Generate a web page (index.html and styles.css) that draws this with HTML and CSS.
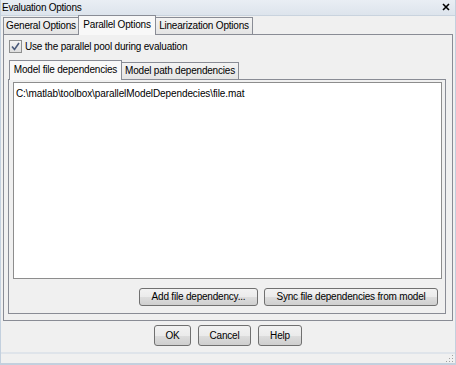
FILE: index.html
```html
<!DOCTYPE html>
<html lang="en">
<head>
<meta charset="UTF-8">
<title>Evaluation Options</title>
<link rel="stylesheet" href="styles.css">
</head>
<body>
<div class="window">
  <div class="titlebar">
    <span class="title">Evaluation Options</span>
    <svg class="close" width="8" height="8" viewBox="0 0 8 8"><path d="M1 1 L7 7 M7 1 L1 7" stroke="#000" stroke-width="1.6"/></svg>
  </div>

  <div class="tabs outer-tabs">
    <div class="tab t-general">General Options</div>
    <div class="tab active t-parallel">Parallel Options</div>
    <div class="tab t-linear">Linearization Options</div>
  </div>

  <div class="panel">
    <label class="check">
      <span class="checkbox">
        <svg width="9" height="9" viewBox="0 0 9 9"><path d="M1 4.5 L3.5 7.5 L8 1" fill="none" stroke="#4a5a7a" stroke-width="1.6"/></svg>
      </span>
      Use the parallel pool during evaluation
    </label>

    <div class="tabs inner-tabs">
      <div class="tab active t-file">Model file dependencies</div>
      <div class="tab t-path">Model path dependencies</div>
    </div>
    <div class="inner-panel">
      <div class="list">C:\matlab\toolbox\parallelModelDependecies\file.mat</div>
      <div class="actions">
        <button class="btn add">Add file dependency...</button>
        <button class="btn sync">Sync file dependencies from model</button>
      </div>
    </div>
  </div>

  <div class="footer">
    <button class="btn ok">OK</button>
    <button class="btn cancel">Cancel</button>
    <button class="btn help">Help</button>
  </div>

  <div class="status">
    <svg class="grip" width="9" height="9" viewBox="0 0 9 9">
      <rect x="7" y="1" width="1" height="1" fill="#a0a0a0"/>
      <rect x="4" y="4" width="1" height="1" fill="#a0a0a0"/>
      <rect x="7" y="4" width="1" height="1" fill="#a0a0a0"/>
      <rect x="1" y="7" width="1" height="1" fill="#a0a0a0"/>
      <rect x="4" y="7" width="1" height="1" fill="#a0a0a0"/>
      <rect x="7" y="7" width="1" height="1" fill="#a0a0a0"/>
    </svg>
  </div>
</div>
</body>
</html>
```

FILE: styles.css
```css
body {
  margin: 0;
  font-family: "Liberation Sans", Arial, sans-serif;
  font-size: 10px;
  letter-spacing: -0.2px;
  color: #000;
}

.window {
  width: 456px;
  height: 365px;
  box-sizing: border-box;
  background: #f0f0f0;
  border-left: 1px solid #c3d0de;
  border-right: 1px solid #c3d0de;
  border-bottom: 2px solid #c3d0de;
  display: flex;
  flex-direction: column;
}

.titlebar {
  height: 15px;
  background: linear-gradient(#e9eef4, #dde4ec);
  border-bottom: 1px solid #c9d3de;
  display: flex;
  align-items: center;
  justify-content: space-between;
  padding: 0 5px 0 1px;
}

.title {
  letter-spacing: -0.25px;
}

.tabs {
  display: flex;
  align-items: flex-end;
}

.tab {
  border: 1px solid #898c95;
  border-bottom: none;
  background: linear-gradient(#f3f3f3, #e4e4e4);
  box-sizing: border-box;
  text-align: center;
  height: 17px;
  line-height: 16px;
  margin-right: -1px;
  white-space: nowrap;
}

.tab.active {
  background: #f8f8f8;
  position: relative;
  z-index: 1;
  margin-bottom: -1px;
  height: 20px;
  line-height: 18px;
}

.t-general { width: 76px; }
.t-parallel { width: 78px; }
.t-linear { width: 98px; }
.t-file { width: 113px; }
.t-path { width: 118px; }

.outer-tabs {
  padding-left: 2px;
  height: 18px;
}

.panel {
  margin: 0 2px 0 2px;
  height: 288px;
  box-sizing: border-box;
  border: 1px solid #898c95;
  background: #f0f0f0;
  padding: 5px 6px 6px 4px;
  display: flex;
  flex-direction: column;
}

.check {
  display: flex;
  align-items: center;
  gap: 3px;
  height: 13px;
  margin-left: 1px;
}

.checkbox {
  width: 11px;
  height: 11px;
  border: 1px solid #8e8f8f;
  background: linear-gradient(#f4f4f4, #dedede);
  display: flex;
  align-items: center;
  justify-content: center;
}

.inner-tabs {
  margin-top: 9px;
  height: 17px;
  padding-left: 1px;
}

.inner-panel {
  flex: 1;
  border: 1px solid #898c95;
  background: #f0f0f0;
  padding: 2px 3px 5px 4px;
  display: flex;
  flex-direction: column;
}

.list {
  height: 197px;
  box-sizing: border-box;
  background: #fff;
  border: 1px solid #8d8d8d;
  padding: 5px 2px;
  letter-spacing: -0.1px;
}

.actions {
  display: flex;
  justify-content: flex-end;
  gap: 6px;
  margin-top: 9px;
  padding-right: 4px;
}

.btn {
  font-family: "Liberation Sans", Arial, sans-serif;
  font-size: 10px;
  letter-spacing: -0.2px;
  white-space: nowrap;
  height: 18px;
  padding: 0;
  border: 1px solid #707070;
  border-radius: 3px;
  background: linear-gradient(#f2f2f2 0%, #ebebeb 50%, #dddddd 51%, #cfcfcf 100%);
  color: #000;
}

.add { width: 119px; }
.sync { width: 174px; }

.footer {
  display: flex;
  justify-content: center;
  gap: 7px;
  padding-top: 4px;
  height: 23px;
}

.footer .btn {
  height: 21px;
}

.ok { width: 37px; }
.cancel { width: 53px; }
.help { width: 44px; }

.status {
  margin-top: 4px;
  flex: 1;
  border-top: 2px solid #dfe4ea;
  display: flex;
  justify-content: flex-end;
  align-items: flex-end;
}

.grip {
  margin: 0 1px 0 0;
}
```
